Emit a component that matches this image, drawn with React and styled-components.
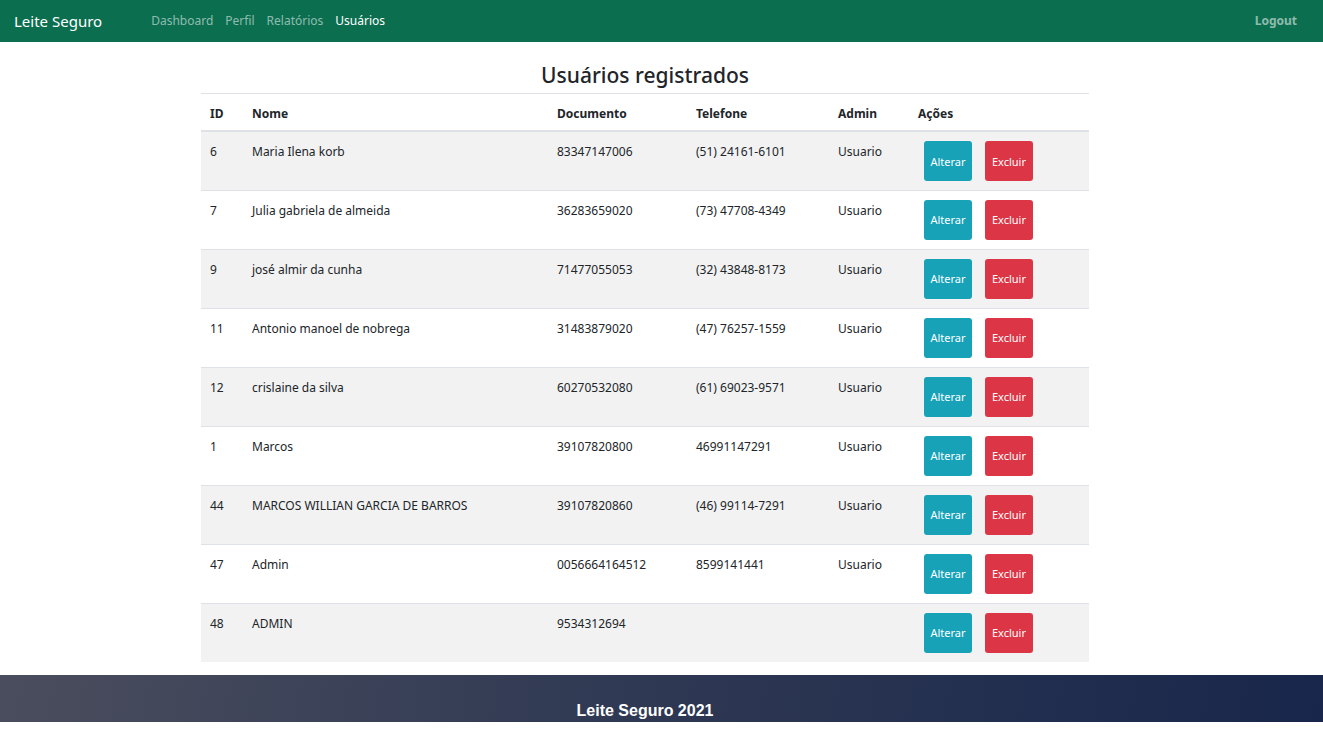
import React from "react";
import styled, { createGlobalStyle } from "styled-components";

const GlobalStyle = createGlobalStyle`
  html, body { margin: 0; padding: 0; background: #fff; }
  body {
    font-family: "Noto Sans", "Open Sans", sans-serif;
    font-size: 12px;
    line-height: 1.5;
    color: #212529;
  }
  * { box-sizing: border-box; }
`;

const Page = styled.div`
  display: flex;
  flex-direction: column;
  min-height: 722px;
`;

const NavBar = styled.nav`
  height: 42px;
  background: #0b6e4f;
  display: flex;
  align-items: center;
  padding: 0 26px 0 14px;
`;

const Brand = styled.a`
  color: #fff;
  font-size: 15px;
  margin-right: 43px;
  text-decoration: none;
`;

const NavLinks = styled.div`
  display: flex;
  flex: 1;
`;

const NavLink = styled.a`
  color: ${(p) => (p.$active ? "#fff" : "rgba(255,255,255,0.55)")};
  font-size: 12px;
  padding: 0 6px;
  text-decoration: none;
`;

const Logout = styled.a`
  color: rgba(255, 255, 255, 0.55);
  font-weight: 700;
  font-size: 12px;
  text-decoration: none;
`;

const Main = styled.main`
  flex: 1;
  display: flex;
  flex-direction: column;
  align-items: center;
  padding: 0 33px 13px 0;
`;

const Title = styled.h3`
  margin: 0;
  padding-top: 21px;
  font-size: 21px;
  font-weight: 500;
  line-height: 1.2;
  height: 51px;
`;

const Table = styled.table`
  width: 888px;
  border-collapse: collapse;
  table-layout: fixed;
`;

const Th = styled.th`
  text-align: left;
  font-weight: 700;
  padding: 11px 9px 7px;
  border-top: 1px solid #dee2e6;
  border-bottom: 2px solid #dee2e6;
  width: ${(p) => p.$w}px;
`;

const Row = styled.tr`
  background: ${(p) => (p.$striped ? "#f2f2f2" : "#fff")};
  height: 59px;
`;

const Td = styled.td`
  vertical-align: top;
  padding: 11px 9px 7px;
  border-top: 1px solid #dee2e6;
`;

const ActionCell = styled.td`
  vertical-align: top;
  padding: 9px 9px 8px 15px;
  border-top: 1px solid #dee2e6;
`;

const Actions = styled.div`
  display: flex;
  gap: 13px;
`;

const Button = styled.button`
  width: 48px;
  height: 40px;
  border: none;
  border-radius: 3px;
  color: #fff;
  font-family: inherit;
  font-size: 11px;
  padding: 0;
  background: ${(p) => (p.$variant === "danger" ? "#dc3545" : "#17a2b8")};
`;

const Footer = styled.footer`
  height: 47px;
  background: linear-gradient(100deg, #4a4d5d 0%, #2e3853 50%, #18264b 100%);
  display: flex;
  justify-content: center;
  align-items: flex-end;
  padding: 0 33px 3px 0;
`;

const FooterText = styled.span`
  color: #fff;
  font-family: "Liberation Sans", Arial, sans-serif;
  font-weight: 700;
  font-size: 16px;
  line-height: 1;
`;

const columns = [
  { label: "ID", w: 42 },
  { label: "Nome", w: 305 },
  { label: "Documento", w: 139 },
  { label: "Telefone", w: 142 },
  { label: "Admin", w: 80 },
  { label: "Ações", w: 180 },
];

const users = [
  ["6", "Maria Ilena korb", "83347147006", "(51) 24161-6101", "Usuario"],
  ["7", "Julia gabriela de almeida", "36283659020", "(73) 47708-4349", "Usuario"],
  ["9", "josé almir da cunha", "71477055053", "(32) 43848-8173", "Usuario"],
  ["11", "Antonio manoel de nobrega", "31483879020", "(47) 76257-1559", "Usuario"],
  ["12", "crislaine da silva", "60270532080", "(61) 69023-9571", "Usuario"],
  ["1", "Marcos", "39107820800", "46991147291", "Usuario"],
  ["44", "MARCOS WILLIAN GARCIA DE BARROS", "39107820860", "(46) 99114-7291", "Usuario"],
  ["47", "Admin", "0056664164512", "8599141441", "Usuario"],
  ["48", "ADMIN", "9534312694", "", ""],
];

export default function App() {
  return (
    <>
      <GlobalStyle />
      <Page>
        <NavBar>
          <Brand>Leite Seguro</Brand>
          <NavLinks>
            <NavLink>Dashboard</NavLink>
            <NavLink>Perfil</NavLink>
            <NavLink>Relatórios</NavLink>
            <NavLink $active>Usuários</NavLink>
          </NavLinks>
          <Logout>Logout</Logout>
        </NavBar>
        <Main>
          <Title>Usuários registrados</Title>
          <Table>
            <thead>
              <tr>
                {columns.map((c) => (
                  <Th key={c.label} $w={c.w}>
                    {c.label}
                  </Th>
                ))}
              </tr>
            </thead>
            <tbody>
              {users.map((u, i) => (
                <Row key={u[0]} $striped={i % 2 === 0}>
                  {u.map((v, j) => (
                    <Td key={j}>{v}</Td>
                  ))}
                  <ActionCell>
                    <Actions>
                      <Button>Alterar</Button>
                      <Button $variant="danger">Excluir</Button>
                    </Actions>
                  </ActionCell>
                </Row>
              ))}
            </tbody>
          </Table>
        </Main>
        <Footer>
          <FooterText>Leite Seguro 2021</FooterText>
        </Footer>
      </Page>
    </>
  );
}
